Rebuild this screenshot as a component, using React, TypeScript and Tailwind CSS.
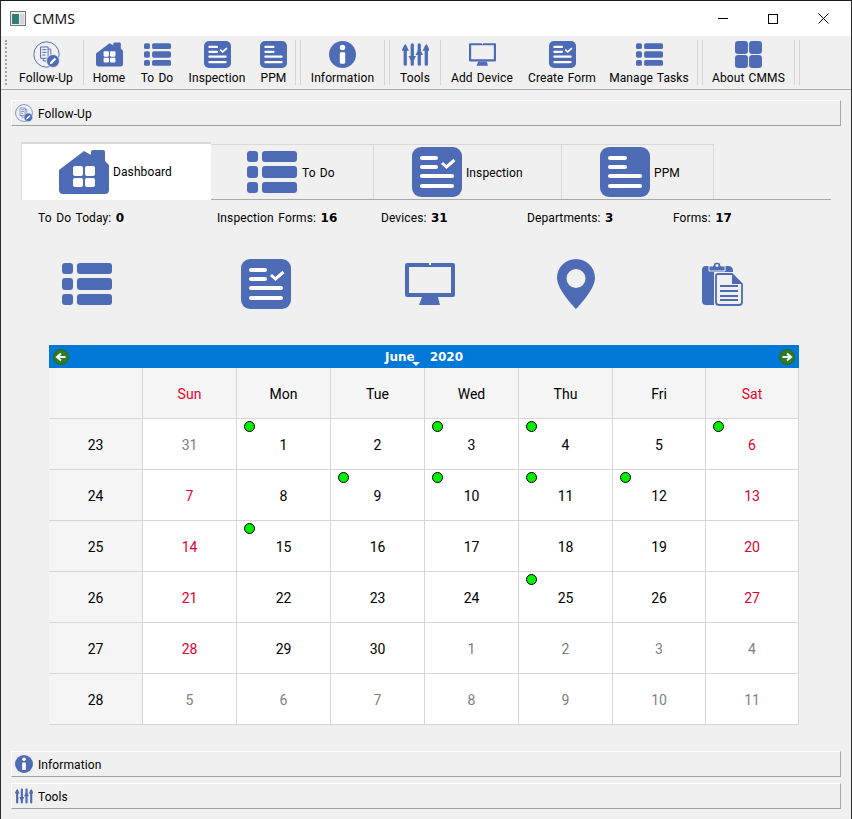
import type { ReactNode } from "react";

const BLUE = "#4e6bb5";

type IconProps = { size?: number };

function ListIcon({ size = 50 }: IconProps) {
  return (
    <svg width={size} height={size} viewBox="0 0 50 50" fill={BLUE}>
      <rect x="0" y="4" width="11" height="11" rx="3" />
      <rect x="15" y="4" width="35" height="11" rx="3" />
      <rect x="0" y="19" width="11" height="12" rx="3" />
      <rect x="15" y="19" width="35" height="12" rx="3" />
      <rect x="0" y="35" width="11" height="11" rx="3" />
      <rect x="15" y="35" width="35" height="11" rx="3" />
    </svg>
  );
}

function FormIcon({ size = 50 }: IconProps) {
  return (
    <svg width={size} height={size} viewBox="0 0 50 50">
      <rect width="50" height="50" rx="9" fill={BLUE} />
      <g fill="#fff">
        <rect x="8" y="9" width="18" height="4" rx="2" />
        <rect x="8" y="18" width="18" height="4" rx="2" />
        <rect x="8" y="27" width="34" height="4" rx="2" />
        <rect x="8" y="37" width="34" height="4" rx="2" />
      </g>
      <path d="M30 16l4.500 4 8-7" fill="none" stroke="#fff" strokeWidth="3" />
    </svg>
  );
}

function DocIcon({ size = 50 }: IconProps) {
  return (
    <svg width={size} height={size} viewBox="0 0 50 50">
      <rect width="50" height="50" rx="9" fill={BLUE} />
      <g fill="#fff">
        <rect x="8" y="9" width="19" height="4" rx="2" />
        <rect x="8" y="18" width="19" height="4" rx="2" />
        <rect x="8" y="27" width="34" height="4" rx="2" />
        <rect x="8" y="37" width="34" height="4" rx="2" />
      </g>
    </svg>
  );
}

function HomeIcon({ size = 50 }: IconProps) {
  return (
    <svg width={size} height={size} viewBox="0 0 50 50">
      <path
        d="M0 23 L25 4 L32 8 L32 5 Q32 3 34 3 L44 3 Q46 3 46 5 L46 14 L50 18 L50 43 Q50 47 46 47 L4 47 Q0 47 0 43 Z"
        fill={BLUE}
      />
      <g fill="#fff">
        <rect x="14" y="19" width="10" height="10" rx="2" />
        <rect x="26" y="19" width="10" height="10" rx="2" />
        <rect x="14" y="31" width="10" height="9" rx="2" />
        <rect x="26" y="31" width="10" height="9" rx="2" />
      </g>
    </svg>
  );
}

function MonitorIcon({ size = 50 }: IconProps) {
  return (
    <svg width={size} height={size} viewBox="0 0 50 50" fill={BLUE}>
      <path
        fillRule="evenodd"
        d="M2 4 H48 Q50 4 50 6 V36 Q50 38 48 38 H2 Q0 38 0 36 V6 Q0 4 2 4 Z M4 8 V34 H46 V8 Z"
      />
      <path d="M17 38 H33 L35 46 H14 Z" />
      <rect x="24" y="4" width="2" height="2" fill="#fff" />
    </svg>
  );
}

function PinIcon({ size = 50 }: IconProps) {
  return (
    <svg width={size} height={size} viewBox="0 0 50 50" fill={BLUE}>
      <path
        fillRule="evenodd"
        d="M25 0 C14.500 0 6 8.500 6 19 C6 31 25 50 25 50 C25 50 44 31 44 19 C44 8.500 35.500 0 25 0 Z M25 10 A9.500 9.500 0 1 1 25 29 A9.500 9.500 0 1 1 25 10 Z"
      />
    </svg>
  );
}

function ClipboardIcon({ size = 50 }: IconProps) {
  return (
    <svg width={size} height={size} viewBox="0 0 50 50">
      <path d="M9 7 H31 Q36 7 36 12 V46 H9 Q5 46 5 42 V11 Q5 7 9 7 Z" fill={BLUE} />
      <path d="M12 12 V7 H16 A4 4 0 0 1 24 7 H28 V12 Z" fill={BLUE} stroke="#f0f0f0" strokeWidth="1" />
      <circle cx="20" cy="6.500" r="1.500" fill="#f0f0f0" />
      <path d="M17 13 H36 L47 24 V48 H17 Z" fill="#f0f0f0" />
      <path
        d="M21 15 H35 L45 25 V43 Q45 46 42 46 H22 Q19 46 19 43 V17 Q19 15 21 15 Z"
        fill="#f0f0f0"
        stroke={BLUE}
        strokeWidth="1.800"
      />
      <path d="M35 15 V25 H45" fill={BLUE} />
      <g fill={BLUE}>
        <rect x="23" y="26" width="18" height="2" />
        <rect x="23" y="31" width="18" height="2" />
        <rect x="23" y="36" width="18" height="2" />
        <rect x="23" y="40" width="18" height="2" />
      </g>
    </svg>
  );
}

function InfoIcon({ size = 50 }: IconProps) {
  return (
    <svg width={size} height={size} viewBox="0 0 50 50">
      <circle cx="25" cy="25" r="25" fill={BLUE} />
      <circle cx="25" cy="12" r="5" fill="#fff" />
      <rect x="20" y="21" width="10" height="21" rx="2" fill="#fff" />
    </svg>
  );
}

function ToolsIcon({ size = 50 }: IconProps) {
  return (
    <svg width={size} height={size} viewBox="0 0 50 50" fill={BLUE}>
      <rect x="3" y="8" width="6" height="38" rx="3" />
      <rect x="16" y="4" width="6" height="42" rx="3" />
      <rect x="29" y="4" width="6" height="42" rx="3" />
      <rect x="42" y="8" width="6" height="38" rx="3" />
      <path d="M-1 18 L6 5 L13 18 Z" />
      <path d="M12 28 L19 41 L26 28 Z" />
      <path d="M25 26 L32 13 L39 26 Z" />
      <path d="M38 18 L45 5 L52 18 Z" />
    </svg>
  );
}

function GridIcon({ size = 50 }: IconProps) {
  return (
    <svg width={size} height={size} viewBox="0 0 50 50" fill={BLUE}>
      <rect width="24" height="24" rx="6" />
      <rect x="26" width="24" height="24" rx="6" />
      <rect y="26" width="24" height="24" rx="6" />
      <rect x="26" y="26" width="24" height="24" rx="6" />
    </svg>
  );
}

function FollowUpIcon({ size = 50 }: IconProps) {
  return (
    <svg width={size} height={size} viewBox="0 0 50 50" fill="none" stroke={BLUE}>
      <circle cx="25" cy="25" r="23.500" strokeWidth="1.800" />
      <path d="M14 11 H28 V32 H14 Z" strokeWidth="1.800" />
      <path d="M28 15 H33 V26 M19 32 V37 H28" strokeWidth="1.800" />
      <path d="M17 16 H25 M17 21 H25 M17 26 H23" strokeWidth="1.800" />
      <circle cx="37" cy="37" r="12" fill={BLUE} stroke="#f0f0f0" strokeWidth="1.500" />
      <path d="M31 43 L32 39 L40 31 L43 34 L35 42 Z" fill="#fff" stroke="none" />
    </svg>
  );
}

function ToolButton({ className, icon, label }: { className: string; icon: ReactNode; label: string }) {
  return (
    <div className={`flex h-[45px] shrink-0 flex-col items-center pt-px ${className}`}>
      <div className="flex h-[27px] items-center">{icon}</div>
      <span className="mt-[2px] text-[12px] leading-[16px] tracking-[0.1px] whitespace-nowrap text-black [word-spacing:1px]">
        {label}
      </span>
    </div>
  );
}

function Sep() {
  return <div className="mx-px h-[45px] w-px shrink-0 bg-[#d4d4d4]" />;
}

function SepPair() {
  return (
    <div className="mx-px flex shrink-0 gap-[4px]">
      <div className="h-[45px] w-px bg-[#d4d4d4]" />
      <div className="h-[45px] w-px bg-[#d4d4d4]" />
    </div>
  );
}

function SectionBar({ icon, label }: { icon: ReactNode; label: string }) {
  return (
    <div className="flex h-[26px] items-center gap-[5px] border border-t-white border-r-[#a8a8a8] border-b-[#a0a0a0] border-l-white pl-[3px] text-[12px] tracking-[0.1px] text-black">
      {icon}
      <span className="pt-px">{label}</span>
    </div>
  );
}

function TabItem({
  className,
  icon,
  label,
  active,
}: {
  className: string;
  icon: ReactNode;
  label: string;
  active?: boolean;
}) {
  return (
    <div
      className={`flex shrink-0 items-center text-[12px] tracking-[0.1px] text-black ${className} ${
        active
          ? "-mb-px h-[58px] border-t-2 border-l border-[#d9d9d9] bg-white"
          : "mt-[2px] h-[55px] border-t border-r border-[#d9d9d9] [word-spacing:1px]"
      }`}
    >
      {icon}
      <span className={active ? "" : "pt-px"}>{label}</span>
    </div>
  );
}

const stats = [
  { label: "To Do Today:", value: "0", col: "w-[179px]", icon: <ListIcon /> },
  { label: "Inspection Forms:", value: "16", col: "w-[164px]", icon: <FormIcon /> },
  { label: "Devices:", value: "31", col: "w-[146px]", icon: <MonitorIcon /> },
  { label: "Departments:", value: "3", col: "w-[146px]", icon: <PinIcon /> },
  { label: "Forms:", value: "17", col: "w-[120px]", icon: <ClipboardIcon /> },
];

type Day = { d: number; other?: boolean; dot?: boolean };

const weeks: { wk: number; days: Day[] }[] = [
  {
    wk: 23,
    days: [
      { d: 31, other: true },
      { d: 1, dot: true },
      { d: 2 },
      { d: 3, dot: true },
      { d: 4, dot: true },
      { d: 5 },
      { d: 6, dot: true },
    ],
  },
  {
    wk: 24,
    days: [
      { d: 7 },
      { d: 8 },
      { d: 9, dot: true },
      { d: 10, dot: true },
      { d: 11, dot: true },
      { d: 12, dot: true },
      { d: 13 },
    ],
  },
  {
    wk: 25,
    days: [{ d: 14 }, { d: 15, dot: true }, { d: 16 }, { d: 17 }, { d: 18 }, { d: 19 }, { d: 20 }],
  },
  {
    wk: 26,
    days: [{ d: 21 }, { d: 22 }, { d: 23 }, { d: 24 }, { d: 25, dot: true }, { d: 26 }, { d: 27 }],
  },
  {
    wk: 27,
    days: [
      { d: 28 },
      { d: 29 },
      { d: 30 },
      { d: 1, other: true },
      { d: 2, other: true },
      { d: 3, other: true },
      { d: 4, other: true },
    ],
  },
  {
    wk: 28,
    days: [
      { d: 5, other: true },
      { d: 6, other: true },
      { d: 7, other: true },
      { d: 8, other: true },
      { d: 9, other: true },
      { d: 10, other: true },
      { d: 11, other: true },
    ],
  },
];

const dayNames = ["Sun", "Mon", "Tue", "Wed", "Thu", "Fri", "Sat"];

function NavArrow({ dir }: { dir: "left" | "right" }) {
  return (
    <svg width="16" height="16" viewBox="0 0 16 16">
      <circle cx="8" cy="8" r="7.500" fill="#2f7d22" stroke="#2a6b20" strokeWidth="1" />
      <path
        d={dir === "left" ? "M12.500 8 H5 M8 4.500 L4 8 L8 11.500" : "M3.500 8 H11 M8 4.500 L12 8 L8 11.500"}
        fill="none"
        stroke="#fff"
        strokeWidth="2"
      />
    </svg>
  );
}

function dayColor(day: Day, col: number) {
  if (day.other) return "text-[#808080]";
  if (col === 0 || col === 6) return "text-[#e6002e]";
  return "text-black";
}

function Calendar() {
  return (
    <div className="ml-[38px] w-[750px]">
      <div className="flex h-[23px] items-center justify-between bg-[#0078d7] px-[4px]">
        <NavArrow dir="left" />
        <div className="relative flex gap-[15px] font-['DejaVu_Sans',sans-serif] text-[12px] font-bold text-white">
          <span>June</span>
          <span>2020</span>
          <div className="absolute top-[14px] left-[27px] h-0 w-0 border-x-[4px] border-t-[4px] border-x-transparent border-t-white" />
        </div>
        <NavArrow dir="right" />
      </div>
      <div className="grid grid-cols-[94px_94px_94px_94px_94px_94px_93px_93px] text-[14px]">
        <div className="h-[51px] border-r border-b border-[#d6d6d6] bg-[#f5f5f5]" />
        {dayNames.map((name, i) => (
          <div
            key={name}
            className={`flex h-[51px] items-center justify-center border-r border-b border-[#d6d6d6] bg-[#f5f5f5] pt-[2px] ${
              i === 0 || i === 6 ? "text-[#f0002a]" : "text-black"
            }`}
          >
            {name}
          </div>
        ))}
        {weeks.map((week) => (
          <div key={week.wk} className="contents">
            <div className="flex h-[51px] items-center justify-center border-r border-b border-[#d6d6d6] bg-[#f5f5f5] pt-[2px] text-black">
              {week.wk}
            </div>
            {week.days.map((day, i) => (
              <div
                key={i}
                className={`relative flex h-[51px] items-center justify-center border-r border-b border-[#d6d6d6] bg-white pt-[2px] ${dayColor(day, i)}`}
              >
                {day.dot && (
                  <div className="absolute top-[2px] left-[7px] h-[11px] w-[11px] rounded-full border border-black bg-[#00f000]" />
                )}
                {day.d}
              </div>
            ))}
          </div>
        ))}
      </div>
    </div>
  );
}

export default function App() {
  return (
    <div className="flex h-[819px] w-[852px] flex-col overflow-hidden border-x border-t border-x-[#2b2b2b] border-t-[#1a1a1a] bg-[#f0f0f0] font-['Roboto',sans-serif]">
      {/* title bar */}
      <div className="flex h-[35px] shrink-0 items-center bg-white pl-[9px]">
        <svg width="16" height="16" viewBox="0 0 16 16">
          <rect x="0.500" y="0.500" width="15" height="14" fill="#e8ecea" stroke="#777" />
          <rect x="2" y="3" width="7" height="10" fill="#2f7f72" />
          <rect x="10" y="3" width="4" height="10" fill="#cfd6d4" />
        </svg>
        <span className="ml-[7px] pb-px font-['Noto_Sans',sans-serif] text-[14px] text-[#111]">CMMS</span>
        <div className="ml-auto flex items-center pr-[1px]">
          <div className="flex h-[35px] w-[54px] items-center justify-center">
            <div className="h-px w-[10px] bg-black" />
          </div>
          <div className="flex h-[35px] w-[46px] items-center justify-center">
            <div className="h-[10px] w-[10px] border border-black" />
          </div>
          <div className="flex h-[35px] w-[54px] items-center justify-center">
            <svg width="11" height="11" viewBox="0 0 11 11" stroke="#000" strokeWidth="1">
              <path d="M0.500 0.500 L10.500 10.500 M10.500 0.500 L0.500 10.500" />
            </svg>
          </div>
        </div>
      </div>

      {/* toolbar */}
      <div className="flex h-[54px] shrink-0 items-center border-b border-[#a9a9a9] pl-[4px]">
        <div className="mr-[3px] h-[45px] w-[2px] shrink-0 border-l-2 border-dotted border-[#a0a0a0]" />
        <ToolButton className="w-[72px]" icon={<FollowUpIcon size={27} />} label="Follow-Up" />
        <Sep />
        <ToolButton className="w-[48px]" icon={<HomeIcon size={27} />} label="Home" />
        <ToolButton className="w-[48px]" icon={<ListIcon size={27} />} label="To Do" />
        <ToolButton className="w-[72px]" icon={<FormIcon size={27} />} label="Inspection" />
        <ToolButton className="w-[41px]" icon={<DocIcon size={27} />} label="PPM" />
        <SepPair />
        <ToolButton className="w-[81px]" icon={<InfoIcon size={27} />} label="Information" />
        <SepPair />
        <ToolButton className="w-[48px]" icon={<ToolsIcon size={27} />} label="Tools" />
        <Sep />
        <ToolButton className="w-[80px]" icon={<MonitorIcon size={27} />} label="Add Device" />
        <ToolButton className="w-[80px]" icon={<FormIcon size={27} />} label="Create Form" />
        <ToolButton className="w-[94px]" icon={<ListIcon size={27} />} label="Manage Tasks" />
        <SepPair />
        <ToolButton className="w-[89px]" icon={<GridIcon size={27} />} label="About CMMS" />
        <SepPair />
      </div>

      {/* body */}
      <div className="flex flex-1 flex-col px-[10px] pt-[10px]">
        <SectionBar icon={<FollowUpIcon size={18} />} label="Follow-Up" />

        <div className="mt-[16px] mr-[10px] ml-[10px] flex border-b border-[#a9a9a9]">
          <TabItem active className="w-[190px] gap-1 pl-[37px]" icon={<HomeIcon />} label="Dashboard" />
          <TabItem className="w-[163px] gap-[5px] pl-[36px]" icon={<ListIcon />} label="To Do" />
          <TabItem className="w-[188px] gap-1 pl-[38px]" icon={<FormIcon />} label="Inspection" />
          <TabItem className="w-[152px] gap-1 pl-[38px]" icon={<DocIcon />} label="PPM" />
        </div>

        <div className="mt-[9px] flex pl-[27px] text-[12px] tracking-[0.1px] text-black [word-spacing:1.500px]">
          {stats.map((s) => (
            <div key={s.label} className={`shrink-0 ${s.col}`}>
              {s.label} <span className="font-['DejaVu_Sans',sans-serif] font-bold tracking-normal">{s.value}</span>
            </div>
          ))}
        </div>

        <div className="mt-[32px] flex pl-[51px]">
          {stats.map((s) => (
            <div key={s.label} className={`shrink-0 ${s.col}`}>
              {s.icon}
            </div>
          ))}
        </div>

        <div className="mt-[36px]">
          <Calendar />
        </div>

        <div className="mt-[26px] flex flex-col gap-[6px]">
          <SectionBar icon={<InfoIcon size={18} />} label="Information" />
          <SectionBar icon={<ToolsIcon size={18} />} label="Tools" />
        </div>
      </div>
    </div>
  );
}
